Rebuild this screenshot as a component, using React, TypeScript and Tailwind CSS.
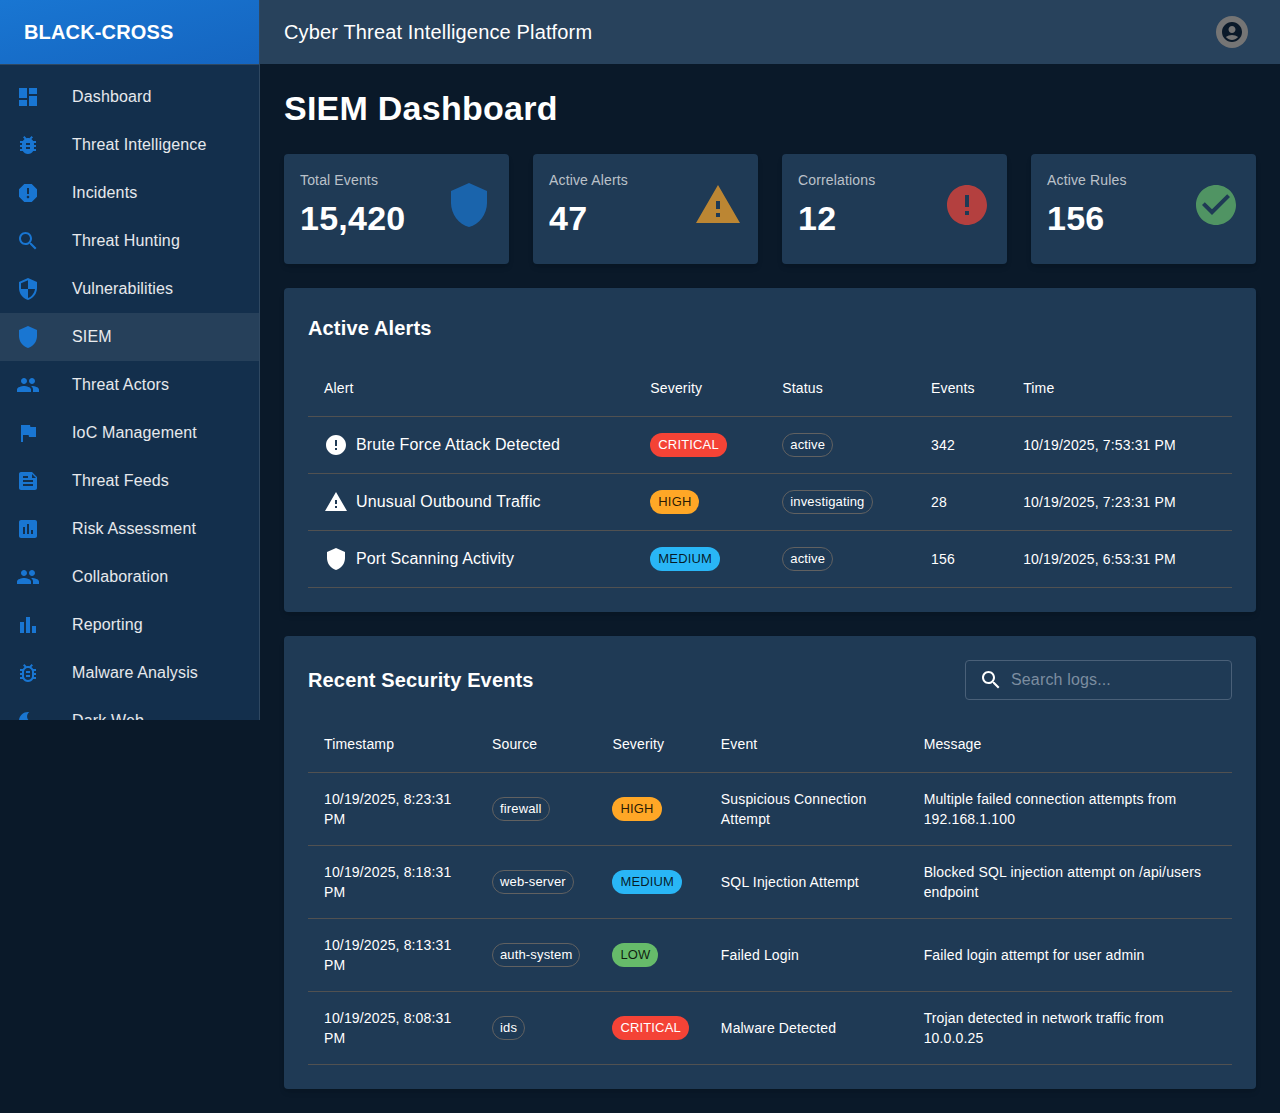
const paths = {
  dashboard: "M3 13h8V3H3v10zm0 8h8v-6H3v6zm10 0h8V11h-8v10zm0-18v6h8V3h-8z",
  bug: "M20 8h-2.81c-.45-.78-1.07-1.45-1.82-1.96L17 4.41 15.59 3l-2.17 2.17C12.96 5.06 12.49 5 12 5c-.49 0-.96.06-1.41.17L8.41 3 7 4.41l1.62 1.63C7.88 6.55 7.26 7.22 6.81 8H4v2h2.09c-.05.33-.09.66-.09 1v1H4v2h2v1c0 .34.04.67.09 1H4v2h2.81c1.04 1.79 2.97 3 5.19 3s4.15-1.21 5.19-3H20v-2h-2.09c.05-.33.09-.66.09-1v-1h2v-2h-2v-1c0-.34-.04-.67-.09-1H20V8zm-6 8h-4v-2h4v2zm0-4h-4v-2h4v2z",
  bugOutlined: "M20 8h-2.81c-.45-.78-1.07-1.45-1.82-1.96L17 4.41 15.59 3l-2.17 2.17C12.96 5.06 12.49 5 12 5s-.96.06-1.41.17L8.41 3 7 4.41l1.62 1.63C7.88 6.55 7.26 7.22 6.81 8H4v2h2.09c-.05.33-.09.66-.09 1v1H4v2h2v1c0 .34.04.67.09 1H4v2h2.81c1.04 1.79 2.97 3 5.19 3s4.15-1.21 5.19-3H20v-2h-2.09c.05-.33.09-.66.09-1v-1h2v-2h-2v-1c0-.34-.04-.67-.09-1H20V8zm-4 4v3c0 .22-.03.47-.07.7l-.1.65-.37.65c-.72 1.24-2.04 2-3.46 2s-2.74-.77-3.46-2l-.37-.64-.1-.65C8.03 15.48 8 15.23 8 15v-4c0-.23.03-.48.07-.7l.1-.65.37-.65c.3-.52.72-.97 1.21-1.31l.57-.39.74-.18c.31-.08.63-.12.94-.12.32 0 .63.04.95.12l.68.16.61.42c.5.34.91.78 1.21 1.31l.38.65.1.65c.04.22.07.47.07.69v1zm-6 2h4v2h-4zm0-4h4v2h-4z",
  report: "M15.73 3H8.27L3 8.27v7.46L8.27 21h7.46L21 15.73V8.27L15.73 3zM12 17.3c-.72 0-1.3-.58-1.3-1.3 0-.72.58-1.3 1.3-1.3.72 0 1.3.58 1.3 1.3 0 .72-.58 1.3-1.3 1.3zm1-4.3h-2V7h2v6z",
  search: "M15.5 14h-.79l-.28-.27C15.41 12.59 16 11.11 16 9.5 16 5.91 13.09 3 9.5 3S3 5.91 3 9.5 5.91 16 9.5 16c1.61 0 3.09-.59 4.23-1.57l.27.28v.79l5 4.99L20.49 19l-4.99-5zm-6 0C7.01 14 5 11.99 5 9.5S7.01 5 9.5 5 14 7.01 14 9.5 11.99 14 9.5 14z",
  security: "M12 1L3 5v6c0 5.55 3.84 10.74 9 12 5.16-1.26 9-6.45 9-12V5l-9-4zm0 10.99h7c-.53 4.12-3.28 7.79-7 8.94V12H5V6.3l7-3.11v8.8z",
  shield: "M12 1 3 5v6c0 5.55 3.84 10.74 9 12 5.16-1.26 9-6.45 9-12V5l-9-4z",
  people: "M16 11c1.66 0 2.99-1.34 2.99-3S17.66 5 16 5c-1.66 0-3 1.34-3 3s1.34 3 3 3zm-8 0c1.66 0 2.99-1.34 2.99-3S9.66 5 8 5C6.34 5 5 6.34 5 8s1.34 3 3 3zm0 2c-2.33 0-7 1.17-7 3.5V19h14v-2.5c0-2.33-4.67-3.5-7-3.5zm8 0c-.29 0-.62.02-.97.05 1.16.84 1.97 1.97 1.97 3.45V19h6v-2.5c0-2.33-4.67-3.5-7-3.5z",
  flag: "M14.4 6 14 4H5v17h2v-7h5.6l.4 2h7V6z",
  feed: "M16 3H5c-1.1 0-1.99.9-1.99 2L3 19c0 1.1.89 2 1.99 2H19c1.1 0 2-.9 2-2V8l-5-5zM7 7h5v2H7V7zm10 10H7v-2h10v2zm0-4H7v-2h10v2zm-1-4V5l4 4h-4z",
  assessment: "M19 3H5c-1.1 0-2 .9-2 2v14c0 1.1.9 2 2 2h14c1.1 0 2-.9 2-2V5c0-1.1-.9-2-2-2zM9 17H7v-7h2v7zm4 0h-2V7h2v10zm4 0h-2v-4h2v4z",
  barChart: "M4 9h4v11H4zm12 4h4v7h-4zm-6-9h4v16h-4z",
  darkMode: "M12 3c-4.97 0-9 4.03-9 9s4.03 9 9 9 9-4.03 9-9c0-.46-.04-.92-.1-1.36-.98 1.37-2.58 2.26-4.4 2.26-2.98 0-5.4-2.42-5.4-5.4 0-1.81.89-3.42 2.26-4.4-.44-.06-.9-.1-1.36-.1z",
  warning: "M1 21h22L12 2 1 21zm12-3h-2v-2h2v2zm0-4h-2v-4h2v4z",
  error: "M12 2C6.48 2 2 6.48 2 12s4.48 10 10 10 10-4.48 10-10S17.52 2 12 2zm1 15h-2v-2h2v2zm0-4h-2V7h2v6z",
  check: "M12 2C6.48 2 2 6.48 2 12s4.48 10 10 10 10-4.48 10-10S17.52 2 12 2zm-2 15l-5-5 1.41-1.41L10 14.17l7.59-7.59L19 8l-9 9z",
  account: "M12 2C6.48 2 2 6.48 2 12s4.48 10 10 10 10-4.48 10-10S17.52 2 12 2zm0 4c1.93 0 3.5 1.57 3.5 3.5S13.93 13 12 13s-3.5-1.57-3.5-3.5S10.07 6 12 6zm0 14c-2.03 0-4.43-.82-6.14-2.88C7.55 15.8 9.68 15 12 15s4.45.8 6.14 2.12C16.43 19.18 14.03 20 12 20z",
};

type IconName = keyof typeof paths;
type Severity = "CRITICAL" | "HIGH" | "MEDIUM" | "LOW";

function Icon({ name, className }: { name: IconName; className: string }) {
  return (
    <svg viewBox="0 0 24 24" className={`shrink-0 fill-current ${className}`}>
      <path d={paths[name]} />
    </svg>
  );
}

const navItems: { label: string; icon: IconName; active?: boolean }[] = [
  { label: "Dashboard", icon: "dashboard" },
  { label: "Threat Intelligence", icon: "bug" },
  { label: "Incidents", icon: "report" },
  { label: "Threat Hunting", icon: "search" },
  { label: "Vulnerabilities", icon: "security" },
  { label: "SIEM", icon: "shield", active: true },
  { label: "Threat Actors", icon: "people" },
  { label: "IoC Management", icon: "flag" },
  { label: "Threat Feeds", icon: "feed" },
  { label: "Risk Assessment", icon: "assessment" },
  { label: "Collaboration", icon: "people" },
  { label: "Reporting", icon: "barChart" },
  { label: "Malware Analysis", icon: "bugOutlined" },
  { label: "Dark Web", icon: "darkMode" },
];

const stats: { label: string; value: string; icon: IconName; color: string }[] = [
  { label: "Total Events", value: "15,420", icon: "shield", color: "text-[#1976d2]" },
  { label: "Active Alerts", value: "47", icon: "warning", color: "text-[#ffa726]" },
  { label: "Correlations", value: "12", icon: "error", color: "text-[#f44336]" },
  { label: "Active Rules", value: "156", icon: "check", color: "text-[#66bb6a]" },
];

const alerts: { title: string; icon: IconName; severity: Severity; status: string; events: number; time: string }[] = [
  { title: "Brute Force Attack Detected", icon: "error", severity: "CRITICAL", status: "active", events: 342, time: "10/19/2025, 7:53:31 PM" },
  { title: "Unusual Outbound Traffic", icon: "warning", severity: "HIGH", status: "investigating", events: 28, time: "10/19/2025, 7:23:31 PM" },
  { title: "Port Scanning Activity", icon: "shield", severity: "MEDIUM", status: "active", events: 156, time: "10/19/2025, 6:53:31 PM" },
];

const logs: { time: string; source: string; severity: Severity; event: string; message: string }[] = [
  { time: "10/19/2025, 8:23:31 PM", source: "firewall", severity: "HIGH", event: "Suspicious Connection Attempt", message: "Multiple failed connection attempts from 192.168.1.100" },
  { time: "10/19/2025, 8:18:31 PM", source: "web-server", severity: "MEDIUM", event: "SQL Injection Attempt", message: "Blocked SQL injection attempt on /api/users endpoint" },
  { time: "10/19/2025, 8:13:31 PM", source: "auth-system", severity: "LOW", event: "Failed Login", message: "Failed login attempt for user admin" },
  { time: "10/19/2025, 8:08:31 PM", source: "ids", severity: "CRITICAL", event: "Malware Detected", message: "Trojan detected in network traffic from 10.0.0.25" },
];

const severityStyles: Record<Severity, string> = {
  CRITICAL: "bg-[#f44336] text-white",
  HIGH: "bg-[#ffa726] text-black/85",
  MEDIUM: "bg-[#29b6f6] text-black/85",
  LOW: "bg-[#66bb6a] text-black/85",
};

function SeverityChip({ severity }: { severity: Severity }) {
  return (
    <span className={`inline-flex h-6 items-center rounded-2xl px-2 text-[13px] whitespace-nowrap ${severityStyles[severity]}`}>
      {severity}
    </span>
  );
}

function OutlineChip({ label }: { label: string }) {
  return (
    <span className="inline-flex h-6 items-center rounded-2xl border border-[#616161] px-[7px] text-[13px] whitespace-nowrap text-white">
      {label}
    </span>
  );
}

function HeadCell({ children }: { children: string }) {
  return <th className="border-b border-[#515151] p-4 text-left text-sm leading-6 font-medium text-white">{children}</th>;
}

function Cell({ children }: { children: React.ReactNode }) {
  return <td className="border-b border-[#515151] p-4 text-sm leading-5 text-white">{children}</td>;
}

export default function App() {
  return (
    <div className="flex min-h-screen bg-[#0a1929] font-['Liberation_Sans',Arial,sans-serif] tracking-[0.15px] text-white">
      {/* Sidebar */}
      <aside className="flex h-[720px] w-[260px] shrink-0 flex-col overflow-hidden border-r border-[#2f4861] bg-[#132f4c]">
        <div className="flex h-[65px] shrink-0 items-center border-b border-[#2f4861] bg-gradient-to-br from-[#1976d2] to-[#1565c0] px-6 text-xl font-bold">
          BLACK-CROSS
        </div>
        <nav className="py-2">
          {navItems.map((item) => (
            <div key={item.label} className={`flex h-12 items-center px-4 ${item.active ? "bg-[#26405a]" : ""}`}>
              <div className="w-14">
                <Icon name={item.icon} className="h-6 w-6 text-[#1976d2]" />
              </div>
              <span className="text-base text-white/90">{item.label}</span>
            </div>
          ))}
        </nav>
      </aside>

      <div className="min-w-0 flex-1">
        {/* Top bar */}
        <header className="flex h-16 items-center justify-between bg-[#28425c] pr-8 pl-6">
          <h1 className="text-xl font-normal">Cyber Threat Intelligence Platform</h1>
          <div className="flex h-8 w-8 items-center justify-center rounded-full bg-[#757575]">
            <Icon name="account" className="h-6 w-6 text-[#0a1929]" />
          </div>
        </header>

        <main className="p-6">
          <h2 className="mb-6 text-[34px] leading-[41.99px] font-bold tracking-[0.25px]">SIEM Dashboard</h2>

          <div className="mb-6 grid grid-cols-4 gap-6">
            {stats.map((stat) => (
              <div key={stat.label} className="flex items-center justify-between rounded bg-[#1f3a55] px-4 pt-4 pb-6 shadow-md">
                <div>
                  <div className="mb-2 text-sm leading-5 text-white/70">{stat.label}</div>
                  <div className="text-[34px] leading-[41.99px] font-bold tracking-[0.25px]">{stat.value}</div>
                </div>
                <Icon name={stat.icon} className={`h-12 w-12 opacity-70 ${stat.color}`} />
              </div>
            ))}
          </div>

          <section className="mb-6 rounded bg-[#1f3a55] p-6 shadow-md">
            <h3 className="mb-4 text-xl leading-8 font-semibold">Active Alerts</h3>
            <table className="w-full border-collapse">
              <thead>
                <tr>
                  {["Alert", "Severity", "Status", "Events", "Time"].map((col) => (
                    <HeadCell key={col}>{col}</HeadCell>
                  ))}
                </tr>
              </thead>
              <tbody>
                {alerts.map((alert) => (
                  <tr key={alert.title}>
                    <Cell>
                      <div className="flex items-center gap-2">
                        <Icon name={alert.icon} className="h-6 w-6 text-white" />
                        <span className="text-base leading-6">{alert.title}</span>
                      </div>
                    </Cell>
                    <Cell>
                      <SeverityChip severity={alert.severity} />
                    </Cell>
                    <Cell>
                      <OutlineChip label={alert.status} />
                    </Cell>
                    <Cell>{alert.events}</Cell>
                    <Cell>{alert.time}</Cell>
                  </tr>
                ))}
              </tbody>
            </table>
          </section>

          <section className="rounded bg-[#1f3a55] p-6 shadow-md">
            <div className="mb-4 flex items-center justify-between">
              <h3 className="text-xl leading-8 font-semibold">Recent Security Events</h3>
              <label className="flex h-10 w-[267px] items-center gap-2 rounded border border-[#4a6078] px-[13px]">
                <Icon name="search" className="h-6 w-6 text-white" />
                <input
                  placeholder="Search logs..."
                  className="w-full bg-transparent text-base text-white outline-none placeholder:text-[#7c8da0]"
                />
              </label>
            </div>
            <table className="w-full border-collapse">
              <thead>
                <tr>
                  {["Timestamp", "Source", "Severity", "Event", "Message"].map((col) => (
                    <HeadCell key={col}>{col}</HeadCell>
                  ))}
                </tr>
              </thead>
              <tbody>
                {logs.map((log) => (
                  <tr key={log.time}>
                    <Cell>{log.time}</Cell>
                    <Cell>
                      <OutlineChip label={log.source} />
                    </Cell>
                    <Cell>
                      <SeverityChip severity={log.severity} />
                    </Cell>
                    <Cell>{log.event}</Cell>
                    <Cell>{log.message}</Cell>
                  </tr>
                ))}
              </tbody>
            </table>
          </section>
        </main>
      </div>
    </div>
  );
}
